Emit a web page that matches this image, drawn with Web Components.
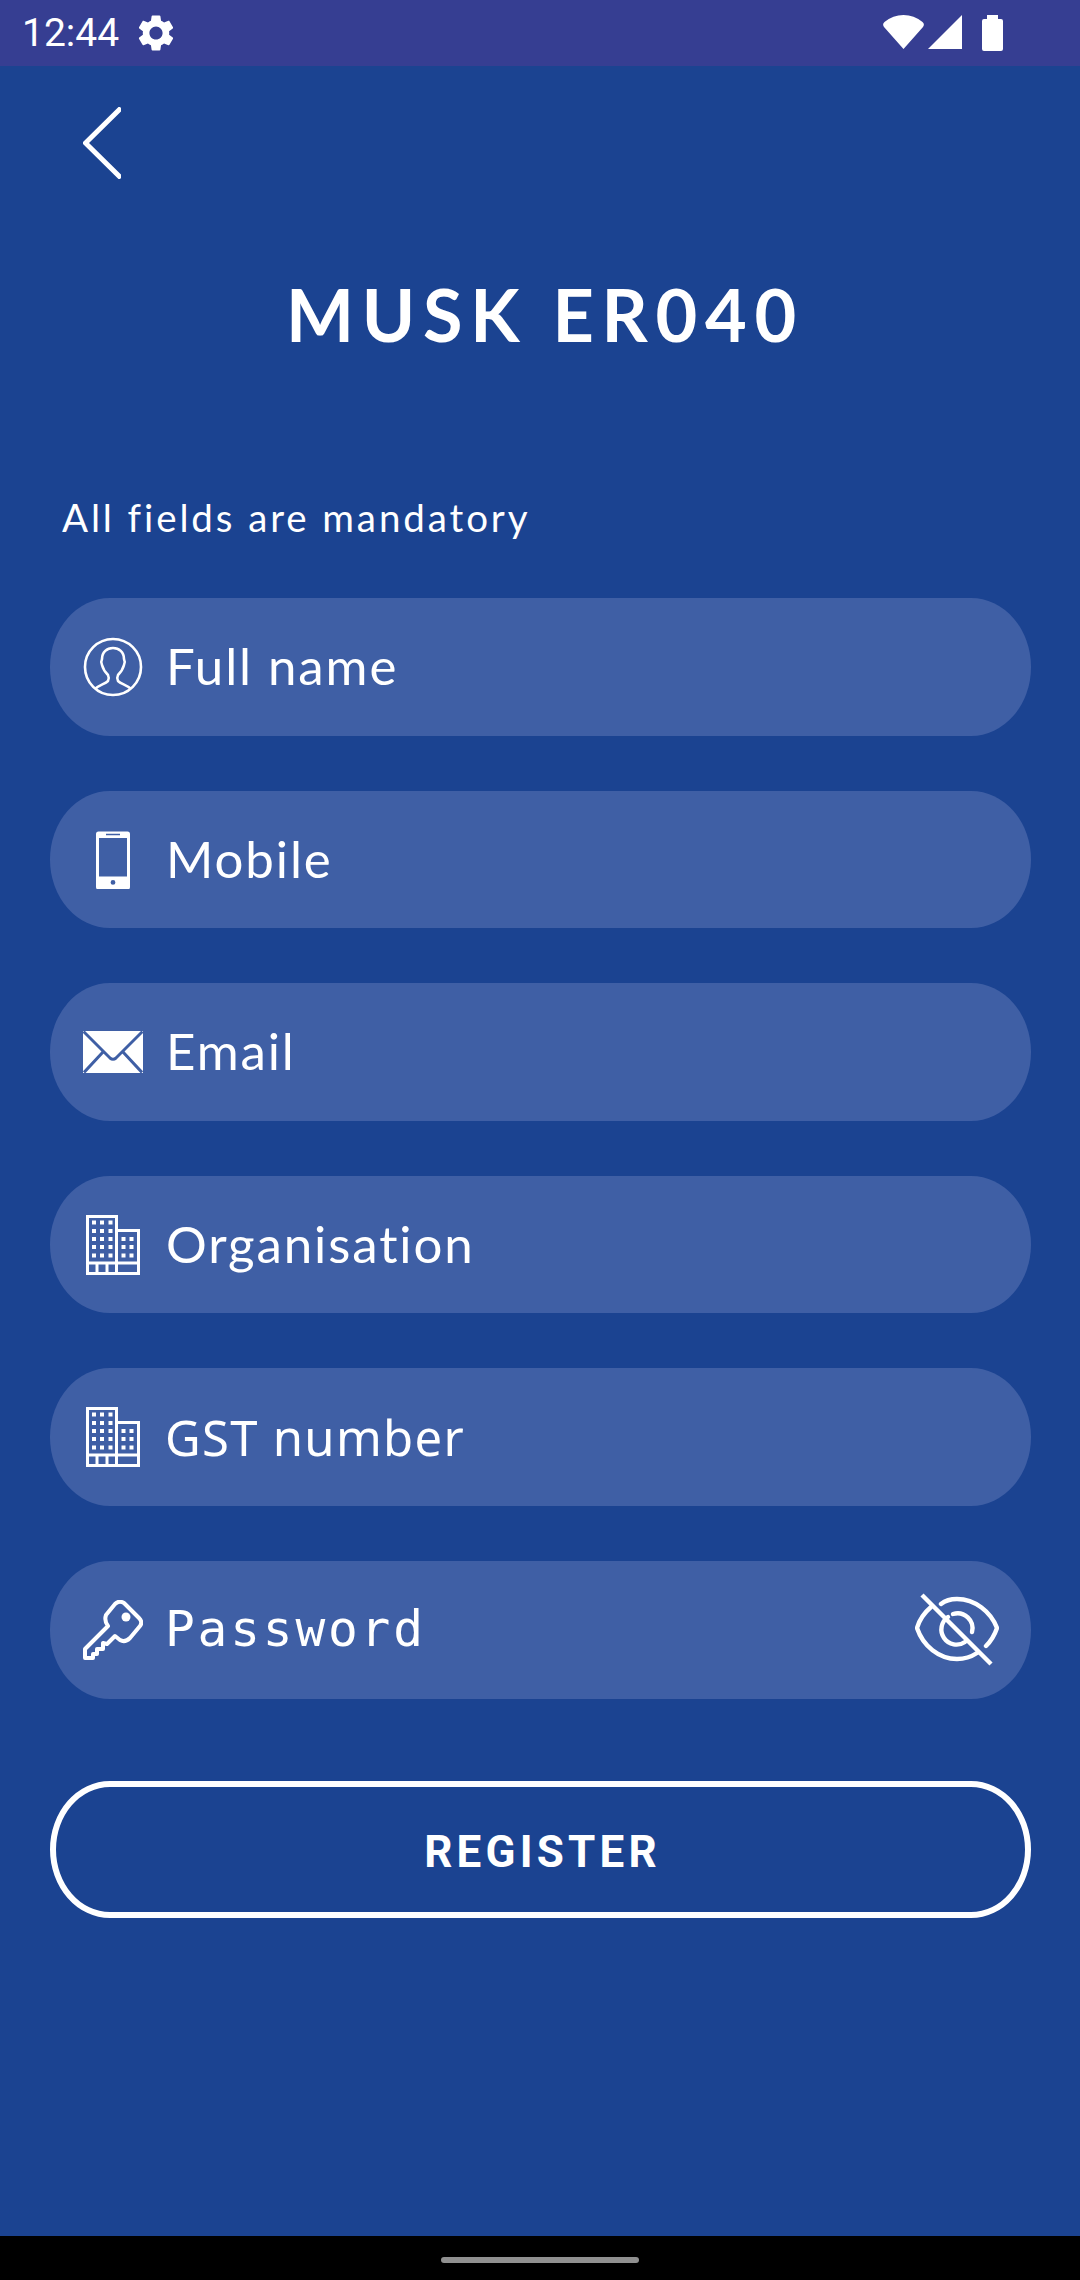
<!DOCTYPE html>
<html>
<head>
<meta charset="utf-8">
<title>Register</title>
<style>
    html, body { margin: 0; padding: 0; }
    body { width: 1080px; height: 2280px; overflow: hidden; font-family: "Lato", sans-serif; }
</style>
</head>
<body>
<register-screen>
    <form-field icon="person">Full name</form-field>
    <form-field icon="phone">Mobile</form-field>
    <form-field icon="mail">Email</form-field>
    <form-field icon="building">Organisation</form-field>
    <form-field icon="building" hint="sans">GST number</form-field>
    <form-field icon="key" hint="mono" toggle>Password</form-field>
</register-screen>

<script>
const ICONS = {
    person: `<svg width="60" height="60" viewBox="0 0 60 60" fill="none" stroke="#fff" stroke-width="2.600">
        <circle cx="30" cy="30" r="28"/>
        <path d="M12 52C16 48 22 47 25 44C26 42 26 40 25 38C22 35 20 32 19 28C18 26 18 24 19 22C19 15 24 11 30 11C36 11 41 15 41 22C42 24 42 26 41 28C40 32 38 35 35 38C34 40 34 42 35 44C38 47 44 48 48 52"/>
    </svg>`,
    phone: `<svg width="60" height="60" viewBox="0 0 60 60" fill="#fff">
        <path transform="translate(0 1.500)" fill-rule="evenodd" d="M15.500 1H44.500A2.500 2.500 0 0 1 47 3.500V56.500A2.500 2.500 0 0 1 44.500 59H15.500A2.500 2.500 0 0 1 13 56.500V3.500A2.500 2.500 0 0 1 15.500 1ZM16 7.500V46H44V7.500ZM23 3.300V4.700H37V3.300ZM30 49.500A2.400 2.400 0 1 0 30 54.300A2.400 2.400 0 1 0 30 49.500Z"/>
    </svg>`,
    mail: `<svg width="60" height="60" viewBox="0 0 60 60">
        <rect x="0" y="9" width="60" height="42" fill="#fff"/>
        <path d="M0.500 9.500L27 36Q30 38.500 33 36L59.500 9.500M1 50.500L20 30M59 50.500L40 30" fill="none" stroke="#3f5fa5" stroke-width="3"/>
    </svg>`,
    building: `<svg width="60" height="60" viewBox="0 0 60 60">
        <path d="M4.500 1.500H33.500V58.500H4.500ZM33.500 15.500H55.500V58.500H33.500ZM4.500 48H55.500M14 58.500V48H24V58.500" fill="none" stroke="#fff" stroke-width="3"/>
        <path fill="#fff" d="M9 5.500h4v4H9zM17 5.500h4v4h-4zM25.500 5.500h4v4h-4zM9 14h4v4H9zM17 14h4v4h-4zM25.500 14h4v4h-4zM9 22h4v4H9zM17 22h4v4h-4zM25.500 22h4v4h-4zM9 30h4v4H9zM17 30h4v4h-4zM25.500 30h4v4h-4zM9 38.500h4v4H9zM17 38.500h4v4h-4zM25.500 38.500h4v4h-4zM38.500 22h4v4h-4zM46.500 22h4v4h-4zM38.500 30h4v4h-4zM46.500 30h4v4h-4zM38.500 38.500h4v4h-4zM46.500 38.500h4v4h-4z"/>
    </svg>`,
    key: `<svg width="60" height="60" viewBox="0 0 60 60" fill="none" stroke="#fff" stroke-width="4" stroke-linejoin="round">
        <path d="M23 15L32 4Q36 0 41 3L56 18Q60 22 57 26L47 38Q42 43 37 40L32 36L24 44L20 43L20 49L14 49L14 54L10 54L10 58L2 58L2 49L25 26Q21 21 23 15Z"/>
        <circle cx="43" cy="17" r="4.500" fill="#fff" stroke="none"/>
    </svg>`
};

class StatusBar extends HTMLElement {
    constructor() {
        super();
        this.attachShadow({ mode: 'open' });
        this.shadowRoot.innerHTML = `
            <style>
                :host { display: flex; align-items: center; height: 66px; background: #363e92; color: #fff; }
                .time { font: 400 39px/66px "Roboto", sans-serif; margin-left: 22px; }
                .gear { margin-left: 15px; }
                .right { display: flex; align-items: flex-start; margin-left: auto; margin-right: 77px; gap: 4px; }
                .right .batt { margin-left: 16px; }
            </style>
            <span class="time">12:44</span>
            <svg class="gear" width="44" height="44" viewBox="0 0 24 24" fill="#fff">
                <path d="M19.14,12.94c.04-.3.06-.61.06-.94 0-.32-.02-.64-.07-.94l2.03-1.58c.18-.14.23-.41.12-.61l-1.92-3.32c-.12-.22-.37-.29-.59-.22l-2.39.96c-.5-.38-1.03-.7-1.62-.94l-.36-2.54c-.04-.24-.24-.41-.48-.41h-3.84c-.24 0-.43.17-.47.41l-.36 2.54c-.59.24-1.13.57-1.62.94l-2.39-.96c-.22-.08-.47 0-.59.22L2.74 8.87c-.12.21-.08.47.12.61l2.03 1.58c-.05.3-.09.63-.09.94s.02.64.07.94l-2.03 1.58c-.18.14-.23.41-.12.61l1.92 3.32c.12.22.37.29.59.22l2.39-.96c.5.38 1.03.7 1.62.94l.36 2.54c.05.24.24.41.48.41h3.84c.24 0 .44-.17.47-.41l.36-2.54c.59-.24 1.13-.56 1.62-.94l2.39.96c.22.08.47 0 .59-.22l1.92-3.32c.12-.22.07-.47-.12-.61l-2.01-1.58zM12 15.6c-1.98 0-3.6-1.62-3.6-3.6s1.62-3.6 3.6-3.6 3.6 1.62 3.6 3.6-1.62 3.6-3.6 3.6z"/>
            </svg>
            <div class="right">
                <svg width="41" height="34" viewBox="0 0 41 34" fill="#fff"><path d="M20.500 34L1 12Q-1 9 1.500 7Q10 0 20.500 0Q31 0 39.500 7Q42 9 40 12Z"/></svg>
                <svg width="34" height="34" viewBox="0 0 34 34" fill="#fff"><path d="M34 0V34H0Z"/></svg>
                <svg class="batt" width="21" height="36" viewBox="0 0 21 36" fill="#fff"><path d="M5 0H16V4H19Q21 4 21 6V34Q21 36 19 36H2Q0 36 0 34V6Q0 4 2 4H5Z"/></svg>
            </div>
        `;
    }
}

class NavHandle extends HTMLElement {
    constructor() {
        super();
        this.attachShadow({ mode: 'open' });
        this.shadowRoot.innerHTML = `
            <style>
                :host { display: flex; justify-content: center; align-items: flex-start; height: 44px; background: #000; }
                .pill { width: 198px; height: 6px; margin-top: 21px; border-radius: 3px; background: #909090; }
            </style>
            <div class="pill"></div>
        `;
    }
}

class FormField extends HTMLElement {
    constructor() {
        super();
        this.attachShadow({ mode: 'open' });
    }

    connectedCallback() {
        const hint = this.getAttribute('hint');
        const icon = ICONS[this.getAttribute('icon')] || '';
        const eye = this.hasAttribute('toggle') ? `
            <svg class="eye" width="84" height="75" viewBox="0 0 84 75" fill="none" stroke="#fff" stroke-width="4.400" stroke-linecap="round" stroke-linejoin="round">
                <path d="M16 15C9 21 4 29 2 36C8 54 24 67 42 67C49 67 56 65 62 61"/>
                <path d="M26 12C31 8 36 7 42 7C60 7 76 20 82 36C80 42 76 49 71 54"/>
                <path d="M33 25A15 15 0 0 0 50 50M38 22A15 15 0 0 1 57 40"/>
                <path d="M7 3L76 72" stroke-linecap="butt" stroke-width="4.400"/>
            </svg>` : '';
        this.shadowRoot.innerHTML = `
            <style>
                :host {
                    display: flex;
                    align-items: center;
                    height: 137.6px;
                    padding: 0 32px 0 33px;
                    box-sizing: border-box;
                    border-radius: 60px / 68.8px;
                    background: #3f5fa5;
                    color: #fff;
                }
                .icon { display: flex; width: 60px; height: 60px; flex: none; }
                .label {
                    margin: 0 0 1px 23px;
                    font: 400 51px/60px "Lato", sans-serif;
                    letter-spacing: 1.900px;
                    white-space: nowrap;
                }
                .label.sans { margin-left: 22px; font-family: "Noto Sans", sans-serif; font-size: 49px; letter-spacing: 1.300px; }
                .label.mono { margin-left: 22px; font-family: "DejaVu Sans Mono", monospace; font-size: 49.500px; letter-spacing: 2.800px; }
                .eye { margin-left: auto; flex: none; }
            </style>
            <span class="icon">${icon}</span>
            <span class="label ${hint || ''}"><slot></slot></span>
            ${eye}
        `;
    }
}

class RegisterScreen extends HTMLElement {
    constructor() {
        super();
        this.attachShadow({ mode: 'open' });
        this.shadowRoot.innerHTML = `
            <style>
                :host { display: flex; flex-direction: column; height: 2280px; background: #1b4391; color: #fff; }
                main { flex: 1; display: flex; flex-direction: column; padding: 0 49px 0 50px; min-height: 0; }
                .back { display: block; margin: 41px 0 0 33px; flex: none; }
                h1 {
                    margin: 95px 0 0;
                    padding-left: 9px;
                    text-align: center;
                    font: 700 72px/80px "Lato", sans-serif;
                    letter-spacing: 7.700px;
                }
                .note {
                    margin: 138px 0 0 12px;
                    font: 400 38.500px/50px "Lato", sans-serif;
                    letter-spacing: 2.900px;
                }
                .fields { display: flex; flex-direction: column; gap: 55px; margin-top: 56px; }
                button {
                    display: block;
                    width: 100%;
                    height: 137px;
                    margin-top: 82px;
                    padding: 5px 0 0 4px;
                    border: 6px solid #fff;
                    border-radius: 60px / 68.5px;
                    background: transparent;
                    color: #fff;
                    font: 700 44px/1 "Roboto", sans-serif;
                    letter-spacing: 4.200px;
                }
            </style>
            <status-bar></status-bar>
            <main>
                <svg class="back" width="38" height="72" viewBox="0 0 38 72" fill="none" stroke="#fff" stroke-width="5">
                    <path d="M38 1L2.500 36L38 71"/>
                </svg>
                <h1>MUSK ER040</h1>
                <div class="note">All fields are mandatory</div>
                <div class="fields"><slot></slot></div>
                <button>REGISTER</button>
            </main>
            <nav-handle></nav-handle>
        `;
    }
}

customElements.define('status-bar', StatusBar);
customElements.define('nav-handle', NavHandle);
customElements.define('form-field', FormField);
customElements.define('register-screen', RegisterScreen);
</script>
</body>
</html>
